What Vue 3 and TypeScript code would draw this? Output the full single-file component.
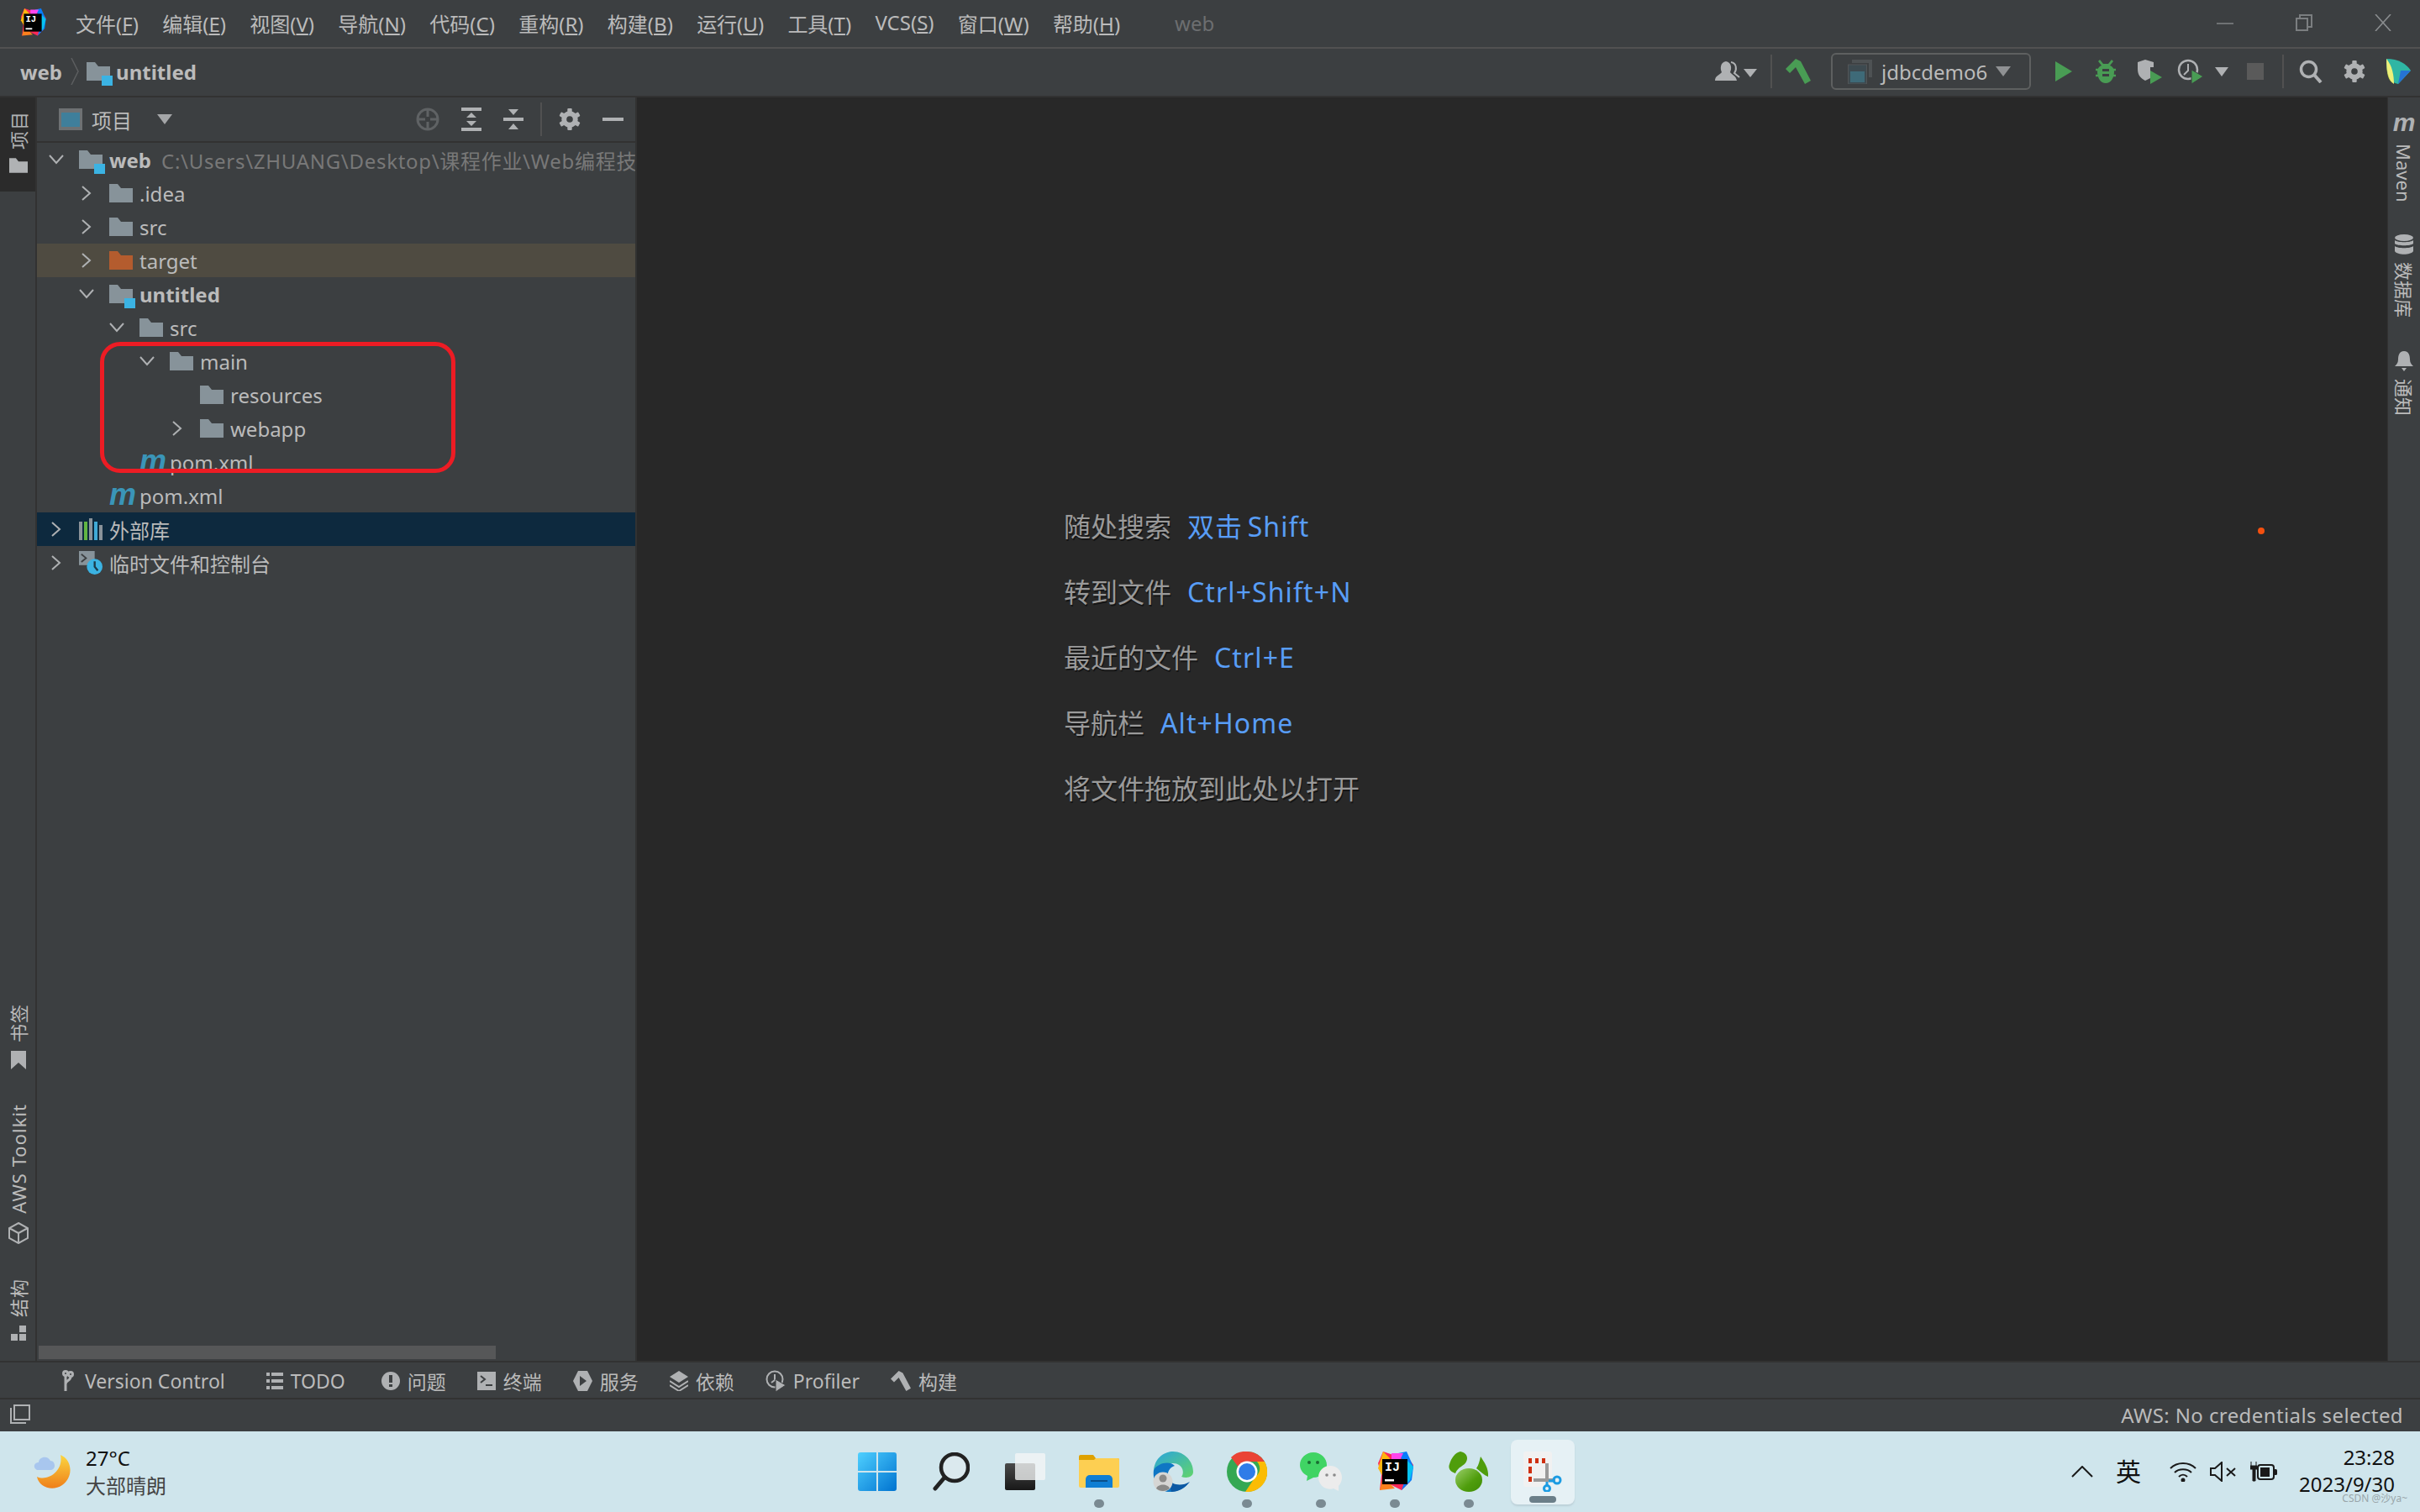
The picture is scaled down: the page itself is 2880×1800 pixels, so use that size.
<script setup lang="ts">
interface MenuItem {
  label: string;
  key: string;
}

interface TreeRow {
  name: string;
  depth: number;
  icon: 'folder' | 'module' | 'target' | 'maven' | 'libs' | 'scratch';
  arrow?: 'open' | 'closed';
  bold?: boolean;
  path?: string;
  tone?: 'excluded' | 'selected';
}

interface Hint {
  text: string;
  shortcut?: string;
}

const menus: MenuItem[] = [
  { label: '文件', key: 'F' },
  { label: '编辑', key: 'E' },
  { label: '视图', key: 'V' },
  { label: '导航', key: 'N' },
  { label: '代码', key: 'C' },
  { label: '重构', key: 'R' },
  { label: '构建', key: 'B' },
  { label: '运行', key: 'U' },
  { label: '工具', key: 'T' },
  { label: 'VCS', key: 'S' },
  { label: '窗口', key: 'W' },
  { label: '帮助', key: 'H' },
];

const rows: TreeRow[] = [
  { name: 'web', depth: 0, icon: 'module', arrow: 'open', bold: true, path: 'C:\\Users\\ZHUANG\\Desktop\\课程作业\\Web编程技术' },
  { name: '.idea', depth: 1, icon: 'folder', arrow: 'closed' },
  { name: 'src', depth: 1, icon: 'folder', arrow: 'closed' },
  { name: 'target', depth: 1, icon: 'target', arrow: 'closed', tone: 'excluded' },
  { name: 'untitled', depth: 1, icon: 'module', arrow: 'open', bold: true },
  { name: 'src', depth: 2, icon: 'folder', arrow: 'open' },
  { name: 'main', depth: 3, icon: 'folder', arrow: 'open' },
  { name: 'resources', depth: 4, icon: 'folder' },
  { name: 'webapp', depth: 4, icon: 'folder', arrow: 'closed' },
  { name: 'pom.xml', depth: 2, icon: 'maven' },
  { name: 'pom.xml', depth: 1, icon: 'maven' },
  { name: '外部库', depth: 0, icon: 'libs', arrow: 'closed', tone: 'selected' },
  { name: '临时文件和控制台', depth: 0, icon: 'scratch', arrow: 'closed' },
];

const hints: Hint[] = [
  { text: '随处搜索', shortcut: '双击 Shift' },
  { text: '转到文件', shortcut: 'Ctrl+Shift+N' },
  { text: '最近的文件', shortcut: 'Ctrl+E' },
  { text: '导航栏', shortcut: 'Alt+Home' },
  { text: '将文件拖放到此处以打开' },
];
</script>

<template>
  <div class="ide">
    <svg class="defs" width="0" height="0">
      <defs>
        <symbol id="folder" viewBox="0 0 28 22">
          <path d="M0 0H10L14 5H28V22H0Z" fill="currentColor" />
        </symbol>
        <symbol id="gear" viewBox="0 0 24 24">
          <g fill="currentColor">
            <path fill-rule="evenodd" d="M12 3a9 9 0 1 0 0 18a9 9 0 1 0 0-18Zm0 5.500a3.500 3.500 0 1 1 0 7a3.500 3.500 0 1 1 0-7Z" />
            <rect x="9.500" y="0" width="5" height="24" rx="1" />
            <rect x="9.500" y="0" width="5" height="24" rx="1" transform="rotate(60 12 12)" />
            <rect x="9.500" y="0" width="5" height="24" rx="1" transform="rotate(120 12 12)" />
            <circle cx="12" cy="12" r="3.500" fill="#3c3f41" />
          </g>
        </symbol>
        <symbol id="ij" viewBox="0 0 44 48">
          <path d="M8 0L20 4L34 2L44 16L40 36L30 46L18 40L4 46L6 28L2 14Z" fill="#fe2857" />
          <path d="M26 2L36 0L44 18L42 34L30 46L38 22Z" fill="#087cfa" />
          <path d="M2 20L8 0L16 8L8 30Z" fill="#fdb60d" />
          <path d="M4 46L8 30L22 44Z" fill="#fc801d" />
          <path d="M18 2H32L28 10H18Z" fill="#ff45ed" />
          <path d="M36 10L44 18L40 34L36 38Z" fill="#07c3f2" />
          <rect x="7" y="9" width="30" height="30" fill="#000" />
          <text x="10" y="23" class="ij-text">IJ</text>
          <rect x="10" y="33" width="11" height="2.500" fill="#fff" />
        </symbol>
      </defs>
    </svg>

    <!-- title bar -->
    <header class="titlebar">
      <svg class="app-logo" width="32" height="34"><use href="#ij" /></svg>
      <nav class="menus">
        <span v-for="m in menus" :key="m.key" class="menu">{{ m.label }}(<u>{{ m.key }}</u>)</span>
      </nav>
      <span class="window-title">web</span>
      <div class="window-controls">
        <svg width="20" height="20" viewBox="0 0 20 20"><path d="M0 11H20" stroke="#6f7274" stroke-width="2" /></svg>
        <svg width="20" height="20" viewBox="0 0 20 20" fill="none" stroke="#7b7e80" stroke-width="2"><rect x="1" y="5" width="13" height="14" /><path d="M5 5V1H19V15H14" /></svg>
        <svg width="20" height="20" viewBox="0 0 20 20"><path d="M1 0L19 20M19 0L1 20" stroke="#8a8d8f" stroke-width="1.600" /></svg>
      </div>
    </header>

    <!-- navigation bar -->
    <div class="navbar">
      <span class="crumb">web</span>
      <svg class="crumb-sep" width="10" height="32" viewBox="0 0 10 32"><path d="M1 0L9 16L1 32" fill="none" stroke="#5d5f61" stroke-width="1.500" /></svg>
      <span class="tree-icon">
        <svg width="28" height="22"><use href="#folder" /></svg>
        <i class="module-badge"></i>
      </span>
      <span class="crumb crumb-last">untitled</span>

      <div class="actions">
        <svg class="a-user" width="50" height="26" viewBox="0 0 50 26">
          <path d="M0 24C0 18 6 17 8 14C6 10 6 2 13 1C20 2 20 10 18 14C20 17 25 18 26 24Z" fill="#afb1b3" />
          <path d="M19 2C26 3 26 11 23 15L29 20" fill="none" stroke="#afb1b3" stroke-width="2" />
          <path d="M34 10H50L42 20Z" fill="#afb1b3" />
        </svg>
        <i class="sep a-sep1"></i>
        <svg class="a-hammer" width="30" height="30" viewBox="0 0 30 30">
          <path d="M12 0L0 12L5 17L12 10L23 30L30 26L18 3Z" fill="#499c54" />
        </svg>
        <div class="run-config">
          <svg width="30" height="30" viewBox="0 0 30 30">
            <rect x="0.500" y="7" width="22" height="23" fill="#3d4a50" stroke="#525557" />
            <rect x="3" y="15" width="17" height="13" fill="#3e6a78" />
            <path d="M5 5V1H29V22H25V5Z" fill="#4e5254" />
          </svg>
          <span>jdbcdemo6</span>
          <svg width="18" height="12" viewBox="0 0 18 12"><path d="M0 0H18L9 12Z" fill="#8f9193" /></svg>
        </div>
        <svg class="a-run" width="20" height="24" viewBox="0 0 20 24"><path d="M0 0L20 12L0 24Z" fill="#499c54" /></svg>
        <svg class="a-bug" width="24" height="28" viewBox="0 0 24 28">
          <path d="M5 0L9 5H15L19 0L21 2L17 7C20 8 22 11 22 14C22 22 18 28 12 28C6 28 2 22 2 14C2 11 4 8 7 7L3 2Z" fill="#499c54" />
          <path d="M0 12H24M0 19H24" stroke="#499c54" stroke-width="2.500" />
          <path d="M8 11H16V14H8ZM8 17H16V20H8Z" fill="#3c3f41" />
        </svg>
        <svg class="a-cov" width="30" height="30" viewBox="0 0 30 30">
          <path d="M10 1L20 4V10H16V23L10 26C4 23 1 19 1 12V4Z" fill="#afb1b3" />
          <path d="M16 14L30 22L16 30Z" fill="#499c54" />
        </svg>
        <svg class="a-prof" width="31" height="30" viewBox="0 0 31 30">
          <circle cx="13" cy="13" r="11" fill="none" stroke="#afb1b3" stroke-width="2.500" />
          <path d="M13 6V14L8 19" fill="none" stroke="#afb1b3" stroke-width="2" />
          <path d="M17 13L31 21L17 30Z" fill="#499c54" stroke="#3c3f41" stroke-width="1" />
        </svg>
        <svg class="a-caret" width="16" height="11" viewBox="0 0 16 11"><path d="M0 0H16L8 11Z" fill="#afb1b3" /></svg>
        <i class="a-stop"></i>
        <i class="sep a-sep2"></i>
        <svg class="a-search" width="28" height="28" viewBox="0 0 28 28">
          <circle cx="11.500" cy="11.500" r="9" fill="none" stroke="#afb1b3" stroke-width="3.500" />
          <path d="M18 18L26 27" stroke="#afb1b3" stroke-width="4" />
        </svg>
        <svg class="a-gear" width="26" height="28" style="color: #afb1b3"><use href="#gear" /></svg>
        <svg class="a-toolbox" width="29" height="30" viewBox="0 0 29 30">
          <path d="M0 0C14 0 24 6 29 14L14 30C4 28 0 20 0 0Z" fill="#2fb6a4" />
          <path d="M0 0C0 12 2 22 8 29C3 26 0 20 0 0Z" fill="#c9d948" />
          <path d="M0 0C7 8 9 20 9 30C3 26 0 16 0 0Z" fill="#eef07a" />
          <path d="M17 14L29 14L14 30Z" fill="#2673d4" />
        </svg>
      </div>
    </div>

    <div class="workbench">
      <!-- left tool stripe -->
      <aside class="stripe stripe-left">
        <div class="stripe-btn stripe-active">
          <span class="stripe-text">项目</span>
          <svg width="22" height="18"><use href="#folder" /></svg>
        </div>
        <div class="stripe-bottom">
          <div class="stripe-btn">
            <span class="stripe-text">书签</span>
            <svg width="18" height="22" viewBox="0 0 18 22"><path d="M0 0H18V22L9 14L0 22Z" fill="#afb1b3" /></svg>
          </div>
          <div class="stripe-btn">
            <span class="stripe-text">AWS Toolkit</span>
            <svg width="24" height="26" viewBox="0 0 24 26" fill="none" stroke="#afb1b3" stroke-width="2"><path d="M12 1L23 7V19L12 25L1 19V7ZM1 7L12 13L23 7M12 13V25" /></svg>
          </div>
          <div class="stripe-btn">
            <span class="stripe-text">结构</span>
            <svg width="18" height="18" viewBox="0 0 18 18" fill="#afb1b3"><rect x="10" y="0" width="8" height="8" /><rect x="0" y="10" width="8" height="8" /><rect x="10" y="10" width="8" height="8" /></svg>
          </div>
        </div>
      </aside>

      <!-- project tool window -->
      <section class="project">
        <div class="project-head">
          <svg width="28" height="26" viewBox="0 0 28 26">
            <rect width="28" height="26" fill="#6e7173" />
            <rect x="3" y="5" width="22" height="17" fill="#3f7f9b" />
          </svg>
          <span class="project-title">项目</span>
          <svg class="head-caret" width="18" height="12" viewBox="0 0 18 12"><path d="M0 0H18L9 12Z" fill="#a4a6a8" /></svg>
          <div class="head-tools">
            <svg width="28" height="28" viewBox="0 0 28 28" fill="none" stroke="#5f6264" stroke-width="3">
              <circle cx="14" cy="14" r="12" /><path d="M14 2V11M14 17V26M2 14H11M17 14H26" />
            </svg>
            <svg width="24" height="28" viewBox="0 0 24 28" fill="#afb1b3"><rect width="24" height="4" /><rect y="24" width="24" height="4" /><path d="M12 6L18 12H6ZM12 22L6 16H18Z" /></svg>
            <svg width="24" height="26" viewBox="0 0 24 26" fill="#afb1b3"><rect y="11" width="24" height="4" /><path d="M6 1H18L12 8ZM12 18L18 25H6Z" /></svg>
            <i class="head-sep"></i>
            <svg width="26" height="26" style="color: #afb1b3"><use href="#gear" /></svg>
            <i class="head-min"></i>
          </div>
        </div>

        <div class="tree">
          <div
            v-for="(row, i) in rows"
            :key="i"
            class="row"
            :class="row.tone"
            :style="{ paddingLeft: 14 + row.depth * 36 + 'px' }"
          >
            <span class="arrow">
              <svg v-if="row.arrow === 'open'" width="18" height="12" viewBox="0 0 18 12"><path d="M1 1L9 10L17 1" fill="none" stroke="#afb1b3" stroke-width="2" /></svg>
              <svg v-else-if="row.arrow === 'closed'" width="12" height="18" viewBox="0 0 12 18"><path d="M1 1L10 9L1 17" fill="none" stroke="#afb1b3" stroke-width="2" /></svg>
            </span>
            <span class="tree-icon">
              <template v-if="row.icon === 'folder' || row.icon === 'module' || row.icon === 'target'">
                <svg width="28" height="22" :class="{ orange: row.icon === 'target' }"><use href="#folder" /></svg>
                <i v-if="row.icon === 'module'" class="module-badge"></i>
              </template>
              <span v-else-if="row.icon === 'maven'" class="maven">m</span>
              <svg v-else-if="row.icon === 'libs'" width="28" height="26" viewBox="0 0 28 26">
                <rect y="4" width="4" height="22" fill="#8a9299" />
                <rect x="6" y="4" width="4" height="22" fill="#62b543" />
                <rect x="12" y="0" width="4" height="26" fill="#8a9299" />
                <rect x="18" y="4" width="4" height="22" fill="#3fa9d6" />
                <rect x="24" y="8" width="4" height="18" fill="#8a9299" />
              </svg>
              <svg v-else width="30" height="30" viewBox="0 0 30 30">
                <rect width="20" height="18" fill="#87939a" />
                <path d="M3 4L9 9L3 14" fill="none" stroke="#3c3f41" stroke-width="2" />
                <circle cx="20" cy="20" r="10" fill="#3bb3e3" />
                <path d="M20 13V20L24 25" fill="none" stroke="#1c3a4a" stroke-width="2.500" />
              </svg>
            </span>
            <span class="row-name" :class="{ bold: row.bold }">{{ row.name }}</span>
            <span v-if="row.path" class="row-path">{{ row.path }}</span>
          </div>
          <div class="red-mark"></div>
        </div>
        <div class="hscroll"></div>
      </section>

      <!-- editor placeholder -->
      <main class="editor">
        <p v-for="h in hints" :key="h.text" class="hint">
          <span>{{ h.text }}</span>
          <span v-if="h.shortcut" class="shortcut">{{ h.shortcut }}</span>
        </p>
        <i class="red-dot"></i>
      </main>

      <!-- right tool stripe -->
      <aside class="stripe stripe-right">
        <div class="stripe-btn">
          <span class="maven maven-gray">m</span>
          <span class="stripe-text">Maven</span>
        </div>
        <div class="stripe-btn">
          <svg width="24" height="24" viewBox="0 0 24 24" fill="#afb1b3"><ellipse cx="12" cy="4" rx="11" ry="4" /><path d="M1 7C4 10 20 10 23 7V11C20 14 4 14 1 11ZM1 14C4 17 20 17 23 14V20C20 25 4 25 1 20Z" /></svg>
          <span class="stripe-text">数据库</span>
        </div>
        <div class="stripe-btn">
          <svg width="22" height="24" viewBox="0 0 22 24" fill="#afb1b3"><path d="M11 0C17 0 18 6 18 10C18 14 20 16 22 18H0C2 16 4 14 4 10C4 6 5 0 11 0ZM8 20H14L11 24Z" /></svg>
          <span class="stripe-text">通知</span>
        </div>
      </aside>
    </div>

    <!-- bottom tool buttons -->
    <div class="tools">
      <div class="tool">
        <svg width="14" height="26" viewBox="0 0 14 26" fill="none" stroke="#afb1b3" stroke-width="3"><circle cx="4" cy="4" r="2.500" /><circle cx="10" cy="5" r="2.500" /><path d="M4 7V25M10 8C10 13 4 12 4 17" /></svg>
        <span>Version Control</span>
      </div>
      <div class="tool">
        <svg width="20" height="20" viewBox="0 0 20 20" fill="#afb1b3"><rect width="4" height="4" /><rect x="6" width="14" height="4" /><rect y="8" width="4" height="4" /><rect x="6" y="8" width="14" height="4" /><rect y="16" width="4" height="4" /><rect x="6" y="16" width="14" height="4" /></svg>
        <span>TODO</span>
      </div>
      <div class="tool">
        <svg width="22" height="22" viewBox="0 0 22 22"><circle cx="11" cy="11" r="11" fill="#afb1b3" /><rect x="9" y="4" width="4" height="9" fill="#3c3f41" /><rect x="9" y="15" width="4" height="3" fill="#3c3f41" /></svg>
        <span>问题</span>
      </div>
      <div class="tool">
        <svg width="22" height="22" viewBox="0 0 22 22"><rect width="22" height="22" fill="#afb1b3" /><path d="M4 5L9 9L4 13M10 16H18" fill="none" stroke="#3c3f41" stroke-width="2" /></svg>
        <span>终端</span>
      </div>
      <div class="tool">
        <svg width="23" height="24" viewBox="0 0 23 24"><path d="M6 0H17L23 12L17 24H6L0 12Z" fill="#afb1b3" /><path d="M8 6L16 12L8 18Z" fill="#3c3f41" /></svg>
        <span>服务</span>
      </div>
      <div class="tool">
        <svg width="22" height="24" viewBox="0 0 22 24" fill="#afb1b3"><path d="M11 0L22 7L11 14L0 7Z" /><path d="M0 12L11 19L22 12M0 17L11 24L22 17" fill="none" stroke="#afb1b3" stroke-width="2" /></svg>
        <span>依赖</span>
      </div>
      <div class="tool">
        <svg width="24" height="26" viewBox="0 0 24 26"><circle cx="11" cy="11" r="9.500" fill="none" stroke="#afb1b3" stroke-width="2" /><path d="M11 5V12L7 15" fill="none" stroke="#afb1b3" stroke-width="2" /><path d="M12 11L24 18L12 26Z" fill="#afb1b3" stroke="#3c3f41" /></svg>
        <span>Profiler</span>
      </div>
      <div class="tool">
        <svg width="24" height="24" viewBox="0 0 30 30"><path d="M12 0L0 12L5 17L12 10L23 30L30 26L18 3Z" fill="#afb1b3" /></svg>
        <span>构建</span>
      </div>
    </div>

    <!-- status bar -->
    <footer class="statusbar">
      <svg width="26" height="26" viewBox="0 0 26 26" fill="none" stroke="#afb1b3" stroke-width="2"><rect x="6" y="2" width="18" height="17" /><path d="M2 5V23H20" /></svg>
      <span class="status-text">AWS: No credentials selected</span>
    </footer>

    <!-- windows taskbar -->
    <div class="taskbar">
      <div class="weather">
        <svg width="46" height="44" viewBox="0 0 46 44">
          <defs>
            <linearGradient id="moon" x1="0" y1="0" x2="0" y2="1"><stop offset="0" stop-color="#fbd63f" /><stop offset="1" stop-color="#ef7f1a" /></linearGradient>
          </defs>
          <path d="M32 2C46 8 48 28 34 38C22 46 6 40 4 28C16 34 36 22 32 2Z" fill="url(#moon)" />
          <path d="M4 20C-1 18 0 11 6 11C6 4 17 2 20 9C26 9 27 19 21 20Z" fill="#a8c6ee" />
        </svg>
        <div class="weather-text">
          <span class="temp">27°C</span>
          <span class="desc">大部晴朗</span>
        </div>
      </div>

      <div class="dock">
        <div class="dock-item">
          <svg width="46" height="46" viewBox="0 0 46 46">
            <defs>
              <linearGradient id="win" x1="0" y1="0" x2="1" y2="1"><stop offset="0" stop-color="#4fd0ff" /><stop offset="1" stop-color="#0073d0" /></linearGradient>
            </defs>
            <path d="M0 3A3 3 0 0 1 3 0H22V22H0ZM24 0H43A3 3 0 0 1 46 3V22H24ZM0 24H22V46H3A3 3 0 0 1 0 43ZM24 24H46V43A3 3 0 0 1 43 46H24Z" fill="url(#win)" />
          </svg>
        </div>
        <div class="dock-item">
          <svg width="44" height="46" viewBox="0 0 44 46">
            <circle cx="26" cy="18" r="16" fill="#dbe9ee" stroke="#222" stroke-width="4.500" />
            <path d="M14 30L3 43" stroke="#222" stroke-width="5" stroke-linecap="round" />
          </svg>
        </div>
        <div class="dock-item">
          <svg width="48" height="44" viewBox="0 0 48 44">
            <defs>
              <linearGradient id="taskb" x1="0" y1="0" x2="0" y2="1"><stop offset="0" stop-color="#4a4a4a" /><stop offset="1" stop-color="#181818" /></linearGradient>
            </defs>
            <rect y="12" width="36" height="32" rx="2" fill="url(#taskb)" />
            <rect x="12" width="36" height="32" rx="2" fill="#f4f6f6" fill-opacity="0.780" />
          </svg>
        </div>
        <div class="dock-item has-dot">
          <svg width="48" height="40" viewBox="0 0 48 40">
            <path d="M0 2A2 2 0 0 1 2 0H17L20 4H46A2 2 0 0 1 48 6V10H0Z" fill="#dfa100" />
            <path d="M0 6H18L20 4H46A2 2 0 0 1 48 6V37A2 2 0 0 1 46 39H2A2 2 0 0 1 0 37Z" fill="#fdcf52" />
            <path d="M8 39V29A5 5 0 0 1 13 24H35A5 5 0 0 1 40 29V39Z" fill="#0f7ed3" />
            <rect x="14" y="30" width="20" height="2" fill="#0a4f8a" />
          </svg>
        </div>
        <div class="dock-item">
          <svg width="48" height="48" viewBox="0 0 48 48">
            <defs>
              <linearGradient id="edge1" x1="0" y1="0" x2="1" y2="1"><stop offset="0" stop-color="#2aa4de" /><stop offset="1" stop-color="#61d46b" /></linearGradient>
            </defs>
            <path d="M1 22C3 6 15 0 24 0C38 0 48 12 48 24C48 31 40 32 34 30C38 26 36 14 24 14C14 14 4 18 1 22Z" fill="url(#edge1)" />
            <path d="M1 22C5 14 20 10 26 17C20 19 17 24 18 30C20 40 32 44 42 38C36 46 26 48 20 48C8 48 -1 36 1 22Z" fill="#0f76c4" />
            <path d="M18 32C22 40 34 42 44 36C38 44 30 48 22 48Z" fill="#0c59a4" />
            <circle cx="12" cy="36" r="11.500" fill="#d6d6d4" />
            <circle cx="12" cy="32" r="4.500" fill="#8a8a88" />
            <path d="M4 44C6 38 18 38 20 44C16 48 8 48 4 44Z" fill="#8a8a88" />
          </svg>
        </div>
        <div class="dock-item has-dot">
          <svg width="48" height="48" viewBox="0 0 48 48">
            <circle cx="24" cy="24" r="24" fill="#34a853" />
            <path d="M24 0A24 24 0 0 1 45 12H24A12 12 0 0 0 13.500 18L5 7A24 24 0 0 1 24 0Z" fill="#ea4335" />
            <path d="M45 12A24 24 0 0 1 22 48L34 30A12 12 0 0 0 36 12Z" fill="#fbbc04" />
            <circle cx="24" cy="24" r="12.500" fill="#fff" />
            <circle cx="24" cy="24" r="10" fill="#2f7ce8" />
          </svg>
        </div>
        <div class="dock-item has-dot">
          <svg width="50" height="46" viewBox="0 0 50 46">
            <path d="M16 0C25 0 32 7 32 15C32 23 25 30 16 30L8 34L9 28C3 25 0 20 0 15C0 7 7 0 16 0Z" fill="#40d464" />
            <circle cx="11" cy="12" r="2" fill="#1a6d33" />
            <circle cx="21" cy="12" r="2" fill="#1a6d33" />
            <path d="M36 16C44 16 50 22 50 30C50 34 48 38 46 40L46 46L40 43C30 46 22 38 22 30C22 22 28 16 36 16Z" fill="#ececec" />
            <circle cx="32" cy="27" r="1.800" fill="#8b8b8b" />
            <circle cx="41" cy="27" r="1.800" fill="#8b8b8b" />
          </svg>
        </div>
        <div class="dock-item has-dot">
          <svg width="44" height="48"><use href="#ij" /></svg>
        </div>
        <div class="dock-item has-dot">
          <svg width="48" height="48" viewBox="0 0 48 48">
            <defs>
              <linearGradient id="leaf" x1="0" y1="0" x2="1" y2="1"><stop offset="0" stop-color="#9bcf6a" /><stop offset="0.600" stop-color="#4f9d0c" /><stop offset="1" stop-color="#3e8c05" /></linearGradient>
            </defs>
            <path d="M14 0C20 1 24 6 21 12C19 17 11 18 8 26C2 24 -1 20 1 15C3 8 8 1 14 0Z" fill="#4f9d0c" />
            <path d="M38 6C42 12 48 20 47 30C42 28 38 24 33 20C36 16 37 10 38 6Z" fill="#4f9d0c" />
            <ellipse cx="24" cy="34" rx="16" ry="14" fill="url(#leaf)" />
          </svg>
        </div>
        <div class="dock-item dock-active">
          <svg width="46" height="48" viewBox="0 0 46 48">
            <rect width="34" height="42" rx="3" fill="#f1f1f1" />
            <path d="M6 8H10V14H6ZM14 8H18V14H14ZM22 8H26V14H22ZM6 18H10V26H6ZM6 30H10V36H6Z" fill="#cf2f10" />
            <path d="M26 14H30V34H26Z" fill="#9a9a9a" />
            <path d="M12 32H38V36H12Z" fill="#9a9a9a" />
            <circle cx="40" cy="34" r="4" fill="none" stroke="#1c9ce3" stroke-width="3" />
            <circle cx="28" cy="44" r="3.500" fill="none" stroke="#1c9ce3" stroke-width="3" />
            <path d="M36 35H30M28 40V36" stroke="#1c9ce3" stroke-width="3" />
          </svg>
        </div>
      </div>

      <div class="tray">
        <svg width="26" height="14" viewBox="0 0 26 14"><path d="M1 13L13 1L25 13" fill="none" stroke="#1a1a1a" stroke-width="2" /></svg>
        <span class="ime">英</span>
        <svg class="t-wifi" width="32" height="24" viewBox="0 0 32 24" fill="none" stroke="#1a1a1a" stroke-width="2"><path d="M1 8C9 0 23 0 31 8M6 13C11 8 21 8 26 13M11 18C14 15 18 15 21 18" /><circle cx="16" cy="22" r="1.500" fill="#1a1a1a" /></svg>
        <svg width="32" height="24" viewBox="0 0 32 24" fill="none" stroke="#1a1a1a" stroke-width="2"><path d="M1 8H6L14 1V23L6 16H1ZM20 8L30 17M30 8L20 17" /></svg>
        <svg class="t-batt" width="32" height="24" viewBox="0 0 32 24">
          <rect x="9" y="4" width="19" height="17" rx="3" fill="none" stroke="#1a1a1a" stroke-width="2" />
          <rect x="12" y="7" width="11" height="11" fill="#1a1a1a" />
          <rect x="28" y="9" width="4" height="7" rx="1.500" fill="#1a1a1a" />
          <path d="M1 0V5M7 0V5M0 5H8V9H6V23H3V9H0Z" fill="#1a1a1a" stroke="#1a1a1a" />
        </svg>
        <div class="clock">
          <span>23:28</span>
          <span>2023/9/30</span>
        </div>
        <span class="watermark">CSDN @沙ya~</span>
      </div>
    </div>
  </div>
</template>

<style>
html,
body {
  margin: 0;
  background: #3c3f41;
}
</style>

<style scoped>
.ide {
  position: relative;
  display: flex;
  flex-direction: column;
  width: 2880px;
  height: 1800px;
  overflow: hidden;
  background: #3c3f41;
  color: #bbbbbb;
  font-family: "Noto Sans", "Noto Sans CJK SC", sans-serif;
  font-size: 24px;
}

.defs {
  position: absolute;
}

.ij-text {
  fill: #fff;
  font-family: "Liberation Mono", monospace;
  font-size: 15px;
  font-weight: 700;
}

/* == TITLE BAR == */
.titlebar {
  display: flex;
  align-items: center;
  flex: none;
  box-sizing: border-box;
  height: 58px;
  padding-bottom: 2px;
  border-bottom: 2px solid #515151;
}

.app-logo {
  margin-left: 23px;
}

.menus {
  display: flex;
  gap: 28.300px;
  margin-left: 35px;
}

.window-title {
  margin-left: 65px;
  color: #6c6e70;
}

.window-controls {
  display: flex;
  gap: 74px;
  margin-left: auto;
  margin-right: 34px;
}

/* == NAV BAR == */
.navbar {
  display: flex;
  align-items: center;
  flex: none;
  box-sizing: border-box;
  height: 58px;
  padding-left: 24px;
  padding-bottom: 2px;
  border-bottom: 2px solid #323232;
}

.crumb {
  font-weight: 700;
}

.crumb-sep {
  margin: 0 9px 0 10px;
}

.crumb-last {
  margin-left: 7px;
}

.tree-icon {
  position: relative;
  display: inline-flex;
  align-items: center;
  color: #87939a;
}

.module-badge {
  position: absolute;
  right: -3px;
  bottom: -6px;
  width: 13px;
  height: 12px;
  background: #3bb3e3;
}

.actions {
  display: flex;
  align-items: center;
  margin-left: auto;
  padding-right: 11px;
}

.sep {
  display: block;
  width: 2px;
  height: 40px;
  background: #515151;
}

.a-sep1 {
  margin-left: 16px;
}

.a-hammer {
  margin-left: 16px;
}

.run-config {
  display: flex;
  align-items: center;
  gap: 10px;
  box-sizing: border-box;
  width: 238px;
  height: 44px;
  margin-left: 24px;
  padding: 0 10px 0 18px;
  border: 2px solid #5e6060;
  border-radius: 6px;
}

.a-run {
  margin-left: 29px;
}

.a-bug {
  margin-left: 28px;
}

.a-cov {
  margin-left: 25px;
}

.a-prof {
  margin-left: 18px;
}

.a-caret {
  margin-left: 14px;
}

.a-stop {
  display: block;
  width: 20px;
  height: 20px;
  margin-left: 22px;
  background: #5a5a5a;
}

.a-sep2 {
  margin-left: 22px;
}

.a-search {
  margin-left: 18px;
}

.a-gear {
  margin-left: 25px;
}

.a-toolbox {
  margin-left: 25px;
}

/* == WORKBENCH == */
.workbench {
  display: flex;
  flex: 1;
  min-height: 0;
}

.stripe {
  display: flex;
  flex-direction: column;
  flex: none;
  box-sizing: border-box;
}

.stripe-left {
  width: 44px;
  border-right: 2px solid #323232;
}

.stripe-right {
  width: 39px;
  padding-top: 18px;
  gap: 39px;
  border-left: 1px solid #323232;
}

.stripe-btn {
  display: flex;
  align-items: center;
  gap: 10px;
}

.stripe-left .stripe-btn {
  flex-direction: column;
  padding-left: 2px;
}

.stripe-right .stripe-btn {
  flex-direction: column;
  gap: 9px;
}

.stripe-left .stripe-text {
  transform: rotate(180deg);
  letter-spacing: 1px;
}

.stripe-text {
  writing-mode: vertical-rl;
  text-orientation: sideways;
  font-size: 22px;
  line-height: 26px;
}

.stripe-active {
  height: 112px;
  padding-top: 16px;
  box-sizing: border-box;
  background: #2b2b2b;
  color: #b0b2b4;
}

.stripe-bottom {
  display: flex;
  flex-direction: column;
  gap: 41px;
  margin-top: auto;
  padding-bottom: 24px;
}

/* == PROJECT WINDOW == */
.project {
  position: relative;
  display: flex;
  flex-direction: column;
  flex: none;
  box-sizing: border-box;
  width: 714px;
  border-right: 2px solid #323232;
}

.project-head {
  display: flex;
  align-items: center;
  flex: none;
  box-sizing: border-box;
  height: 54px;
  padding-left: 26px;
  border-bottom: 2px solid #323232;
}

.project-title {
  margin-left: 11px;
}

.head-caret {
  margin-left: 30px;
}

.head-tools {
  display: flex;
  align-items: center;
  gap: 26px;
  margin-left: auto;
  padding-right: 14px;
}

.head-sep {
  width: 2px;
  height: 40px;
  margin: 0 -6px;
  background: #515151;
}

.head-min {
  width: 25px;
  height: 4px;
  background: #afb1b3;
}

.tree {
  position: relative;
  flex: 1;
  overflow: hidden;
}

.row {
  display: flex;
  align-items: center;
  height: 40px;
  white-space: nowrap;
}

.row.excluded {
  background: #4f4b41;
}

.row.selected {
  background: #0d293e;
}

.arrow {
  display: flex;
  align-items: center;
  justify-content: center;
  flex: none;
  width: 18px;
  margin-right: 18px;
}

.tree-icon .orange {
  color: #b45c2e;
}

.row .tree-icon {
  flex: none;
  width: 28px;
  margin-right: 8px;
}

.bold {
  font-weight: 700;
}

.row-path {
  margin-left: 12px;
  color: #787878;
  letter-spacing: 0.700px;
}

.maven {
  color: #3a95b8;
  font-family: "Liberation Sans", sans-serif;
  font-size: 36px;
  font-style: italic;
  font-weight: 700;
  line-height: 30px;
  margin-top: -3px;
}

.maven-gray {
  color: #afb1b3;
  font-size: 30px;
  line-height: 24px;
  margin-top: 0;
  margin-bottom: 4px;
}

.red-mark {
  position: absolute;
  top: 237px;
  left: 75px;
  box-sizing: border-box;
  width: 423px;
  height: 156px;
  border: 5px solid #ed1c24;
  border-radius: 24px;
}

.hscroll {
  position: absolute;
  bottom: 2px;
  left: 2px;
  width: 544px;
  height: 16px;
  background: #565758;
}

/* == EDITOR == */
.editor {
  position: relative;
  flex: 1;
  box-sizing: border-box;
  padding: 489px 0 0 508px;
  background: #282828;
  color: #9a9a9a;
}

.hint {
  display: flex;
  gap: 19px;
  height: 78px;
  margin: 0;
  font-size: 32px;
  line-height: 44px;
  text-shadow: 1px 2px 0 #151515;
}

.shortcut {
  color: #589df6;
  letter-spacing: 1.100px;
  word-spacing: -4px;
  text-shadow: none;
}

.red-dot {
  position: absolute;
  top: 512px;
  left: 1929px;
  width: 8px;
  height: 8px;
  border-radius: 50%;
  background: #f4500f;
}

/* == BOTTOM BARS == */
.tools {
  display: flex;
  align-items: center;
  flex: none;
  gap: 37px;
  height: 40px;
  padding-top: 2px;
  padding-left: 74px;
  border-top: 2px solid #323232;
  border-bottom: 2px solid #323232;
}

.tool {
  display: flex;
  align-items: center;
  gap: 9px;
  font-size: 23px;
}

.tool:nth-child(1) {
  gap: 13px;
  margin-right: 12px;
}

.tool:nth-child(2) {
  margin-right: 6px;
}

.statusbar {
  display: flex;
  align-items: center;
  justify-content: space-between;
  flex: none;
  box-sizing: border-box;
  height: 38px;
  padding: 0 20px 2px 11px;
}

.status-text {
  font-size: 24px;
  letter-spacing: 0.400px;
}

/* == TASKBAR == */
.taskbar {
  position: relative;
  display: grid;
  grid-template-columns: 1fr auto 1fr;
  flex: none;
  height: 96px;
  background: #cfe5ec;
  color: #111;
}

.weather {
  display: flex;
  align-items: center;
  gap: 16px;
  padding-left: 40px;
}

.weather-text {
  display: flex;
  flex-direction: column;
  line-height: 33px;
}

.desc {
  color: #444;
}

.dock {
  display: flex;
  align-items: center;
}

.dock-item {
  position: relative;
  display: flex;
  align-items: center;
  justify-content: center;
  width: 76px;
  height: 77px;
  margin: 0 6px;
  border-radius: 8px;
}

.dock-item.has-dot::after {
  content: '';
  position: absolute;
  bottom: -4px;
  width: 12px;
  height: 10px;
  border-radius: 5px;
  background: #7a8a92;
}

.dock-active {
  background: #e6f1f5;
  box-shadow: 0 2px 2px #bcd0d8;
}

.dock-active::after {
  content: '';
  position: absolute;
  bottom: 2px;
  width: 32px;
  height: 8px;
  border-radius: 4px;
  background: #6b7f89;
}

.tray {
  position: relative;
  display: flex;
  align-items: center;
  justify-content: flex-end;
  padding-right: 30px;
}

.ime {
  margin-left: 27px;
  font-size: 30px;
  line-height: 1;
}

.t-wifi {
  margin: 0 16px 0 34px;
}

.t-batt {
  margin-left: 16px;
}

.clock {
  display: flex;
  flex-direction: column;
  align-items: flex-end;
  margin-top: -2px;
  margin-left: 26px;
  line-height: 32px;
}

.watermark {
  position: absolute;
  right: 15px;
  bottom: 8px;
  color: #9aa5aa;
  font-size: 12px;
}
</style>
